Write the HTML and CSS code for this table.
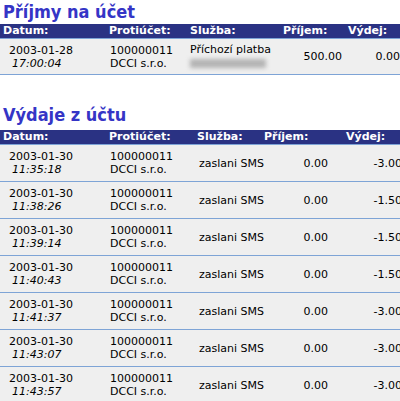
FILE: index.html
```html
<!DOCTYPE html>
<html lang="cs">
<head>
<meta charset="utf-8">
<link rel="stylesheet" href="styles.css">
</head>
<body>
<h2 class="title">Příjmy na účet</h2>
<table class="tbl tbl-in">
  <colgroup><col class="c1"><col class="c2"><col class="c3"><col class="c4"><col class="c5"></colgroup>
  <thead>
    <tr><th>Datum:</th><th>Protiúčet:</th><th>Služba:</th><th>Příjem:</th><th>Výdej:</th></tr>
  </thead>
  <tbody>
    <tr>
      <td class="date">2003-01-28<br><i class="time">17:00:04</i></td>
      <td class="acc">100000011<br>DCCI s.r.o.</td>
      <td class="svc">Příchozí platba<div class="blur-line"><span class="blur"></span></div></td>
      <td class="num">500.00</td>
      <td class="num">0.00</td>
    </tr>
  </tbody>
</table>

<h2 class="title title2">Výdaje z účtu</h2>
<table class="tbl tbl-out">
  <colgroup><col class="c1"><col class="c2"><col class="c3"><col class="c4"><col class="c5"></colgroup>
  <thead>
    <tr><th>Datum:</th><th>Protiúčet:</th><th>Služba:</th><th>Příjem:</th><th>Výdej:</th></tr>
  </thead>
  <tbody>
    <tr><td class="date">2003-01-30<br><i class="time">11:35:18</i></td><td class="acc">100000011<br>DCCI s.r.o.</td><td class="svc">zaslani SMS</td><td class="num">0.00</td><td class="num">-3.00</td></tr>
    <tr><td class="date">2003-01-30<br><i class="time">11:38:26</i></td><td class="acc">100000011<br>DCCI s.r.o.</td><td class="svc">zaslani SMS</td><td class="num">0.00</td><td class="num">-1.50</td></tr>
    <tr><td class="date">2003-01-30<br><i class="time">11:39:14</i></td><td class="acc">100000011<br>DCCI s.r.o.</td><td class="svc">zaslani SMS</td><td class="num">0.00</td><td class="num">-1.50</td></tr>
    <tr><td class="date">2003-01-30<br><i class="time">11:40:43</i></td><td class="acc">100000011<br>DCCI s.r.o.</td><td class="svc">zaslani SMS</td><td class="num">0.00</td><td class="num">-1.50</td></tr>
    <tr><td class="date">2003-01-30<br><i class="time">11:41:37</i></td><td class="acc">100000011<br>DCCI s.r.o.</td><td class="svc">zaslani SMS</td><td class="num">0.00</td><td class="num">-3.00</td></tr>
    <tr><td class="date">2003-01-30<br><i class="time">11:43:07</i></td><td class="acc">100000011<br>DCCI s.r.o.</td><td class="svc">zaslani SMS</td><td class="num">0.00</td><td class="num">-3.00</td></tr>
    <tr><td class="date">2003-01-30<br><i class="time">11:43:57</i></td><td class="acc">100000011<br>DCCI s.r.o.</td><td class="svc">zaslani SMS</td><td class="num">0.00</td><td class="num">-3.00</td></tr>
  </tbody>
</table>
</body>
</html>
```

FILE: styles.css
```css
html {
  overflow: hidden;
  background: #ffffff;
}
body {
  margin: 0;
  font-family: "DejaVu Sans", Verdana, sans-serif;
  font-size: 11px;
  color: #000000;
}
.title {
  margin: 0;
  padding: 0 0 0 3px;
  height: 24px;
  font-family: "DejaVu Sans Condensed", "DejaVu Sans", sans-serif;
  font-size: 18px;
  line-height: 24px;
  font-weight: bold;
  color: #3535c6;
}
.title2 {
  margin-top: 26px;
  padding-top: 2px;
  height: 27px;
}
.tbl {
  border-collapse: collapse;
  table-layout: fixed;
  width: 412px;
}
.tbl th {
  background: #2a3283;
  color: #ffffff;
  font-weight: bold;
  text-align: left;
  padding: 0 0 0 3px;
  height: 14px;
  line-height: 14px;
  border-bottom: 1px solid #7ea4d6;
  white-space: nowrap;
}
.tbl td {
  background: #efefef;
  border-bottom: 1px solid #7ea4d6;
  padding: 0;
  vertical-align: middle;
  line-height: 13px;
  white-space: nowrap;
}
.tbl-in td { height: 35px; }
.tbl-out td { height: 36px; }
.date {
  padding-left: 9px !important;
}
.time {
  display: inline-block;
  padding-left: 3px;
}
.acc {
  padding-left: 4px !important;
}
.num {
  text-align: right;
}
.blur-line {
  height: 15px;
  display: flex;
  align-items: center;
}
.blur {
  display: block;
  width: 76px;
  height: 9px;
  background: #b4b4b4;
  filter: blur(2px);
}
.tbl-in .c1 { width: 106px; }
.tbl-in .c2 { width: 81px; }
.tbl-in .c3 { width: 93px; }
.tbl-in .c4 { width: 65px; }
.tbl-in .c5 { width: 67px; }
.tbl-in .svc { padding-left: 3px; }
.tbl-in .c4-num, .tbl-in td:nth-child(4) { padding-right: 3px; }
.tbl-in td:nth-child(5) { padding-right: 12px; }
.tbl-out .c1 { width: 106px; }
.tbl-out .c2 { width: 88px; }
.tbl-out .c3 { width: 67px; }
.tbl-out .c4 { width: 82px; }
.tbl-out .c5 { width: 69px; }
.tbl-out .svc { padding-left: 5px; }
.tbl-out td:nth-child(4) { padding-right: 15px; }
.tbl-out td:nth-child(5) { padding-right: 10px; }
```
